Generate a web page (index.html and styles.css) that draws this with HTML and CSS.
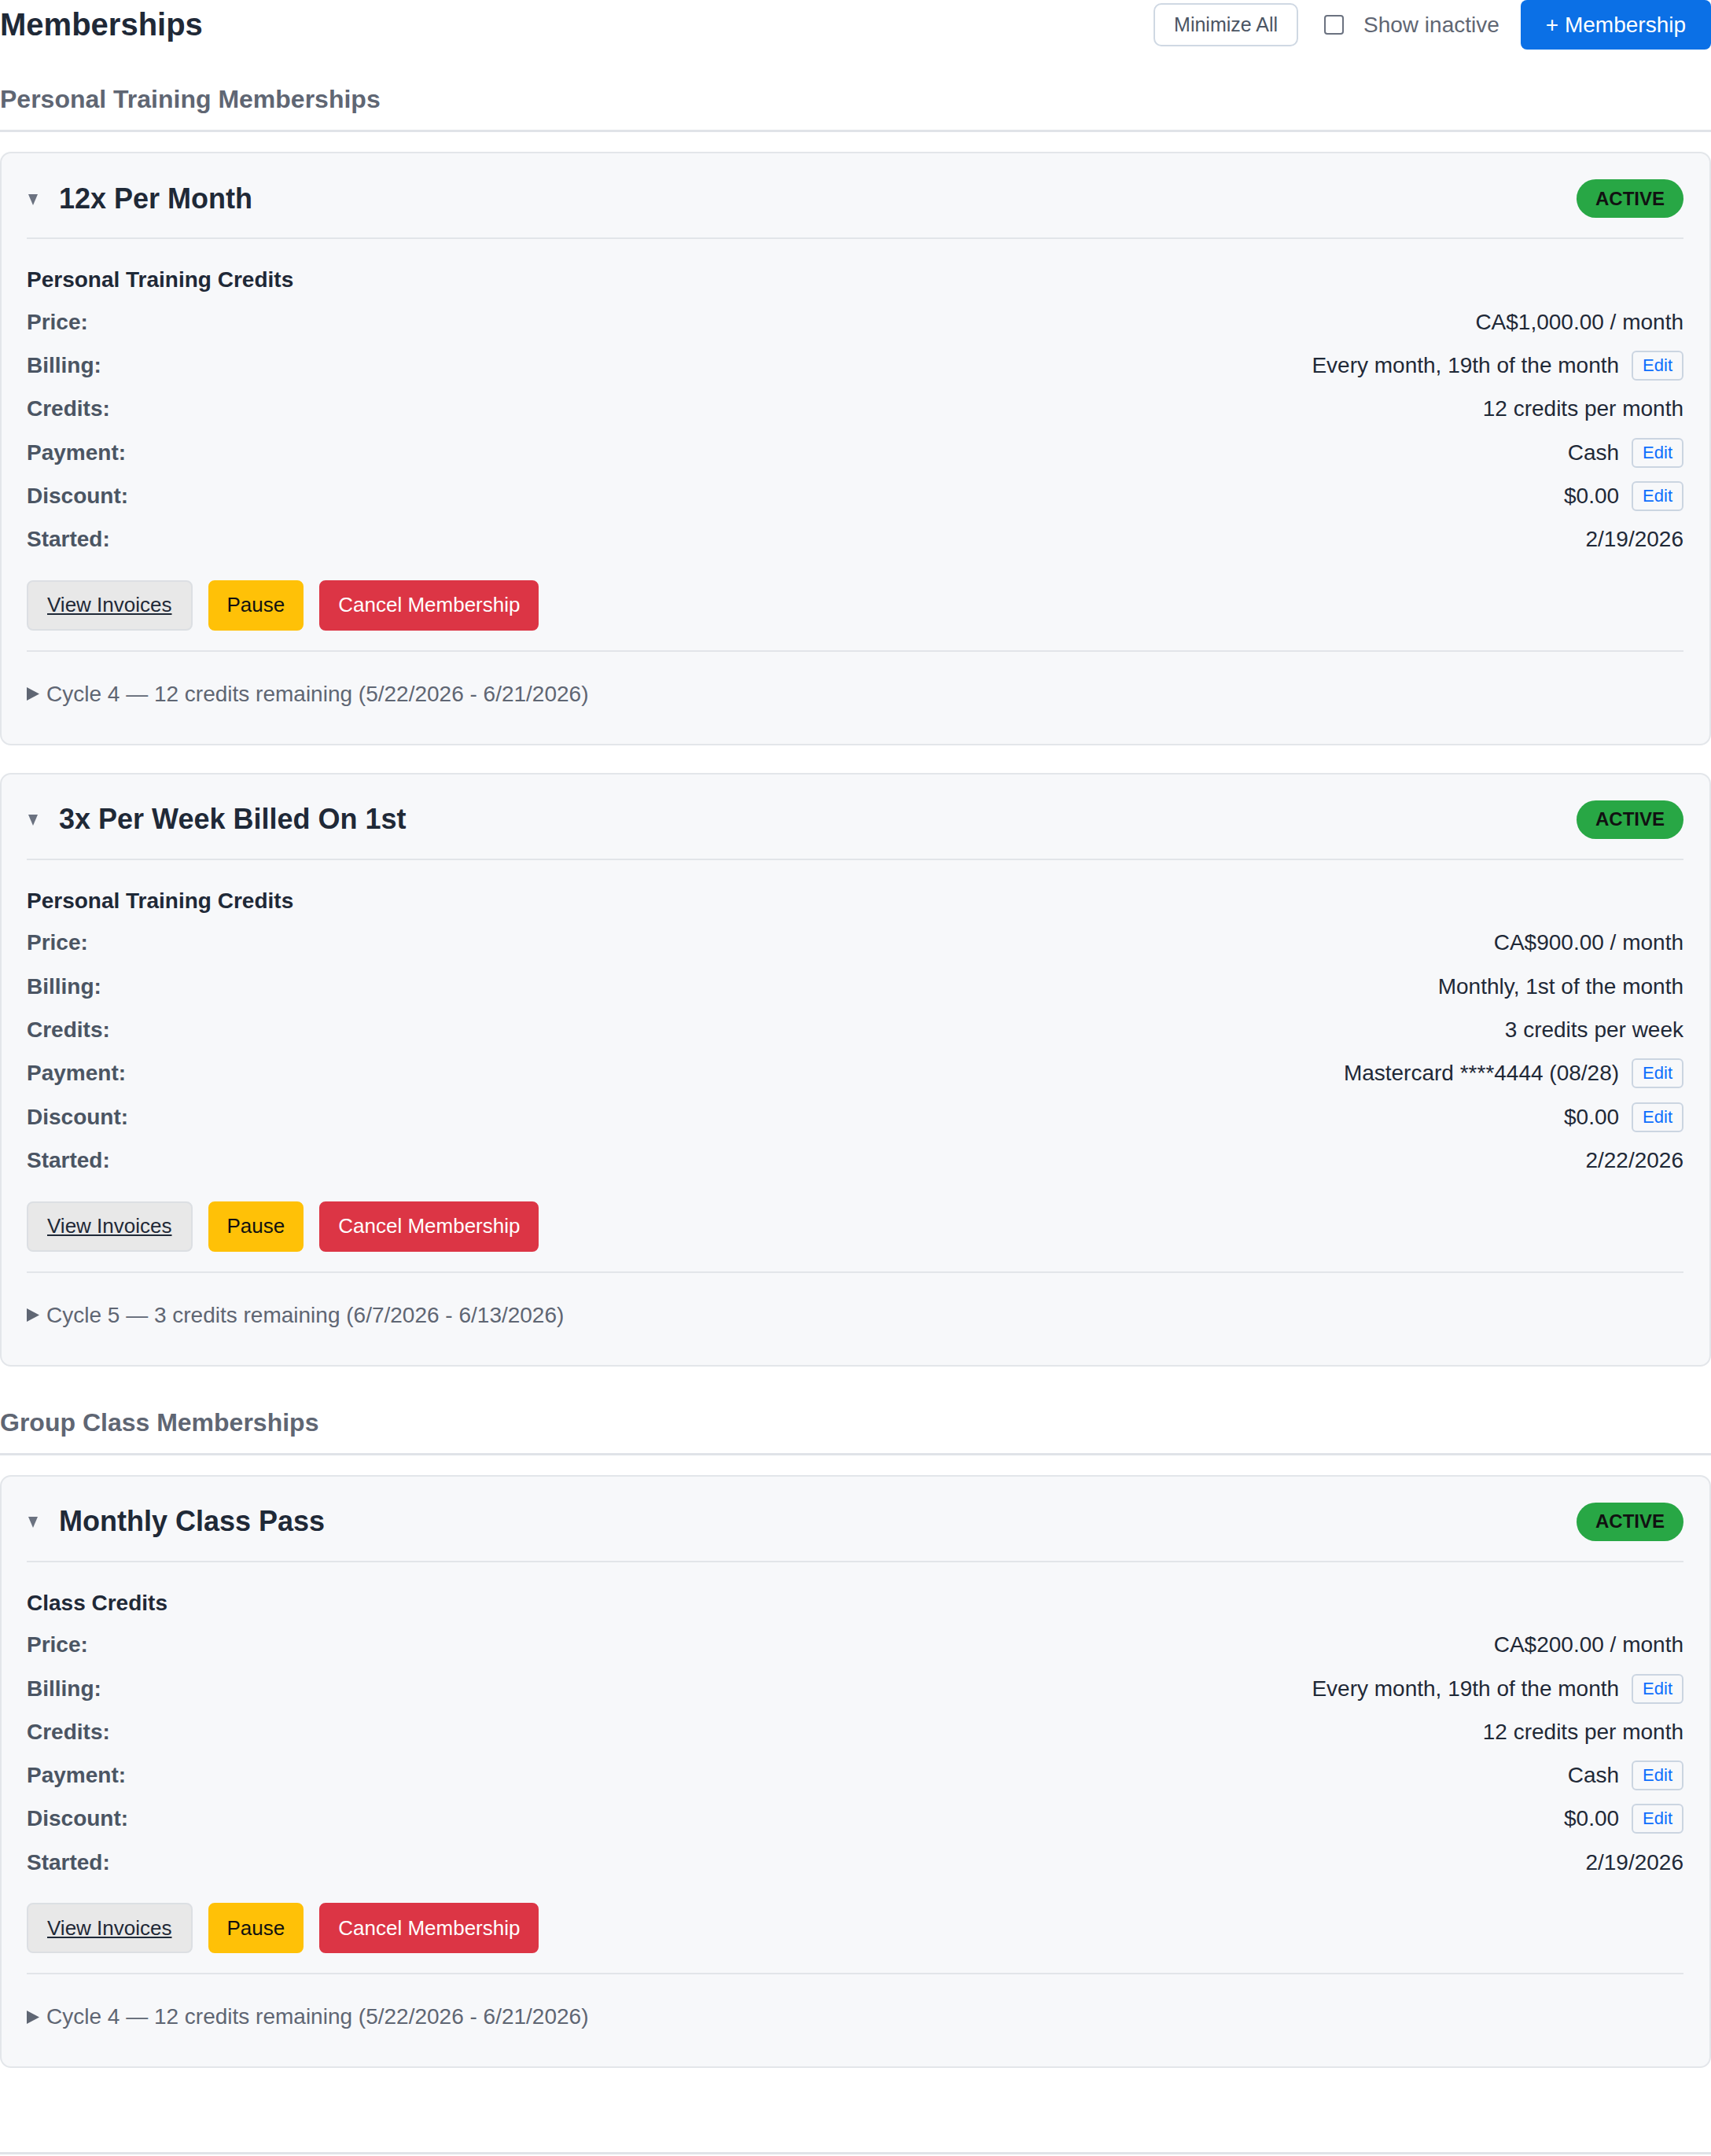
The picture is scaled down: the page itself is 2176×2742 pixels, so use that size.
FILE: index.html
```html
<!DOCTYPE html>
<html lang="en">
<head>
  <meta charset="UTF-8">
  <meta name="viewport" content="width=device-width, initial-scale=1.0">
  <title>Memberships</title>
  <link rel="stylesheet" href="styles.css">
</head>
<body>
  <div class="page-header">
    <h1>Memberships</h1>
    <div class="header-actions">
      <button class="btn-outline">Minimize All</button>
      <label class="toggle"><input type="checkbox"> Show inactive</label>
      <button class="btn-primary">+ Membership</button>
    </div>
  </div>

  <section class="group">
    <h2 class="group-title">Personal Training Memberships</h2>

    <div class="card">
      <div class="card-head">
        <div class="card-title">
          <svg class="caret" viewBox="0 0 12 14"><polygon points="0,0 12,0 6,14"/></svg>
          <h3>12x Per Month</h3>
        </div>
        <span class="badge">ACTIVE</span>
      </div>
      <div class="card-body">
        <div class="credit-type">Personal Training Credits</div>
        <div class="row"><span class="label">Price:</span><span class="value">CA$1,000.00 / month</span></div>
        <div class="row"><span class="label">Billing:</span><span class="value">Every month, 19th of the month<button class="edit">Edit</button></span></div>
        <div class="row"><span class="label">Credits:</span><span class="value">12 credits per month</span></div>
        <div class="row"><span class="label">Payment:</span><span class="value">Cash<button class="edit">Edit</button></span></div>
        <div class="row"><span class="label">Discount:</span><span class="value">$0.00<button class="edit">Edit</button></span></div>
        <div class="row"><span class="label">Started:</span><span class="value">2/19/2026</span></div>
      </div>
      <div class="actions">
        <button class="btn btn-light">View Invoices</button>
        <button class="btn btn-warn">Pause</button>
        <button class="btn btn-danger">Cancel Membership</button>
      </div>
      <details class="cycle">
        <summary><svg class="arrow" viewBox="0 0 16 17"><polygon points="0,0 16,8.5 0,17"/></svg>Cycle 4 — 12 credits remaining (5/22/2026 - 6/21/2026)</summary>
      </details>
    </div>

    <div class="card">
      <div class="card-head">
        <div class="card-title">
          <svg class="caret" viewBox="0 0 12 14"><polygon points="0,0 12,0 6,14"/></svg>
          <h3>3x Per Week Billed On 1st</h3>
        </div>
        <span class="badge">ACTIVE</span>
      </div>
      <div class="card-body">
        <div class="credit-type">Personal Training Credits</div>
        <div class="row"><span class="label">Price:</span><span class="value">CA$900.00 / month</span></div>
        <div class="row"><span class="label">Billing:</span><span class="value">Monthly, 1st of the month</span></div>
        <div class="row"><span class="label">Credits:</span><span class="value">3 credits per week</span></div>
        <div class="row"><span class="label">Payment:</span><span class="value">Mastercard ****4444 (08/28)<button class="edit">Edit</button></span></div>
        <div class="row"><span class="label">Discount:</span><span class="value">$0.00<button class="edit">Edit</button></span></div>
        <div class="row"><span class="label">Started:</span><span class="value">2/22/2026</span></div>
      </div>
      <div class="actions">
        <button class="btn btn-light">View Invoices</button>
        <button class="btn btn-warn">Pause</button>
        <button class="btn btn-danger">Cancel Membership</button>
      </div>
      <details class="cycle">
        <summary><svg class="arrow" viewBox="0 0 16 17"><polygon points="0,0 16,8.5 0,17"/></svg>Cycle 5 — 3 credits remaining (6/7/2026 - 6/13/2026)</summary>
      </details>
    </div>
  </section>

  <section class="group">
    <h2 class="group-title">Group Class Memberships</h2>

    <div class="card">
      <div class="card-head">
        <div class="card-title">
          <svg class="caret" viewBox="0 0 12 14"><polygon points="0,0 12,0 6,14"/></svg>
          <h3>Monthly Class Pass</h3>
        </div>
        <span class="badge">ACTIVE</span>
      </div>
      <div class="card-body">
        <div class="credit-type">Class Credits</div>
        <div class="row"><span class="label">Price:</span><span class="value">CA$200.00 / month</span></div>
        <div class="row"><span class="label">Billing:</span><span class="value">Every month, 19th of the month<button class="edit">Edit</button></span></div>
        <div class="row"><span class="label">Credits:</span><span class="value">12 credits per month</span></div>
        <div class="row"><span class="label">Payment:</span><span class="value">Cash<button class="edit">Edit</button></span></div>
        <div class="row"><span class="label">Discount:</span><span class="value">$0.00<button class="edit">Edit</button></span></div>
        <div class="row"><span class="label">Started:</span><span class="value">2/19/2026</span></div>
      </div>
      <div class="actions">
        <button class="btn btn-light">View Invoices</button>
        <button class="btn btn-warn">Pause</button>
        <button class="btn btn-danger">Cancel Membership</button>
      </div>
      <details class="cycle">
        <summary><svg class="arrow" viewBox="0 0 16 17"><polygon points="0,0 16,8.5 0,17"/></svg>Cycle 4 — 12 credits remaining (5/22/2026 - 6/21/2026)</summary>
      </details>
    </div>
  </section>

  <div class="page-footer"></div>
</body>
</html>
```

FILE: styles.css
```css
body {
  margin: 0;
  font-family: "Liberation Sans", Arial, sans-serif;
  font-size: 28px;
  color: #1f2937;
  background: white;
}
button {
  font-family: inherit;
  cursor: pointer;
}
.page-header {
  display: flex;
  justify-content: space-between;
  align-items: center;
  height: 63px;
  margin-bottom: 44px;
}
.page-header h1 {
  margin: 0;
  font-size: 40px;
  font-weight: 700;
  color: #1f2937;
}
.header-actions {
  display: flex;
  align-items: center;
}
.btn-outline {
  height: 55px;
  padding: 0 24px;
  border: 2px solid #cfd8e3;
  border-radius: 10px;
  background: white;
  color: #4b5563;
  font-size: 25px;
}
.toggle {
  display: flex;
  align-items: center;
  gap: 25px;
  margin-left: 33px;
  color: #5f6673;
  font-size: 28px;
}
.toggle input {
  appearance: none;
  width: 25px;
  height: 25px;
  margin: 0;
  border: 2px solid #6b7280;
  border-radius: 4px;
  background: white;
}
.btn-primary {
  height: 63px;
  margin-left: 27px;
  padding: 0 32px;
  border: none;
  border-radius: 8px;
  background: #0b70e6;
  color: white;
  font-size: 28px;
}
.group + .group {
  margin-top: 52px;
}
.group-title {
  margin: 0 0 25px;
  padding-bottom: 20px;
  border-bottom: 3px solid #e0e3e8;
  font-size: 32px;
  line-height: 38px;
  font-weight: 700;
  color: #5f6673;
}
.card {
  padding: 33px 33px 42px 32px;
  border: 2px solid #e3e6ea;
  border-radius: 14px;
  background: #f7f8fa;
}
.card + .card {
  margin-top: 35px;
}
.card-head {
  display: flex;
  justify-content: space-between;
  align-items: center;
  padding-bottom: 25px;
  border-bottom: 2px solid #e2e5e9;
}
.card-title {
  display: flex;
  align-items: center;
}
.caret {
  width: 12px;
  height: 14px;
  margin: 2px 27px 0 2px;
  fill: #6b7280;
}
.card-title h3 {
  margin: 0;
  font-size: 36px;
  font-weight: 700;
  color: #1f2937;
}
.badge {
  display: inline-flex;
  align-items: center;
  height: 49px;
  padding: 0 24px;
  border-radius: 25px;
  background: #28a745;
  color: #111;
  font-size: 24px;
  font-weight: 700;
}
.card-body {
  padding-top: 25px;
}
.credit-type {
  height: 53px;
  line-height: 53px;
  font-weight: 700;
  color: #1f2937;
}
.row {
  display: flex;
  justify-content: space-between;
  align-items: center;
  height: 55.3px;
}
.label {
  font-weight: 700;
  color: #4b5563;
}
.value {
  display: flex;
  align-items: center;
  color: #1f2937;
}
.edit {
  height: 38px;
  margin-left: 16px;
  padding: 0 12px;
  border: 2px solid #cbd5e1;
  border-radius: 6px;
  background: transparent;
  color: #0d6efd;
  font-size: 22px;
}
.actions {
  display: flex;
  gap: 20px;
  margin-top: 24px;
  padding-bottom: 25px;
  border-bottom: 2px solid #e2e5e9;
}
.btn {
  height: 64px;
  padding: 0 22px;
  border: 2px solid transparent;
  border-radius: 8px;
  font-size: 26px;
}
.btn-light {
  padding: 0 24px;
  background: #e8e8e8;
  border-color: #dcdfe3;
  color: #1f2937;
  text-decoration: underline;
}
.btn-warn {
  background: #ffc107;
  border-color: #ffc107;
  color: #111;
}
.btn-danger {
  background: #dc3545;
  border-color: #dc3545;
  color: white;
}
.cycle {
  margin-top: 33px;
}
.cycle summary {
  display: flex;
  align-items: center;
  gap: 9px;
  line-height: 42px;
  list-style: none;
  color: #5f6673;
  cursor: pointer;
}
.cycle summary::-webkit-details-marker {
  display: none;
}
.arrow {
  width: 16px;
  height: 17px;
  fill: #5f6673;
}
.page-footer {
  margin-top: 107px;
  border-top: 3px solid #e0e3e8;
}
```
